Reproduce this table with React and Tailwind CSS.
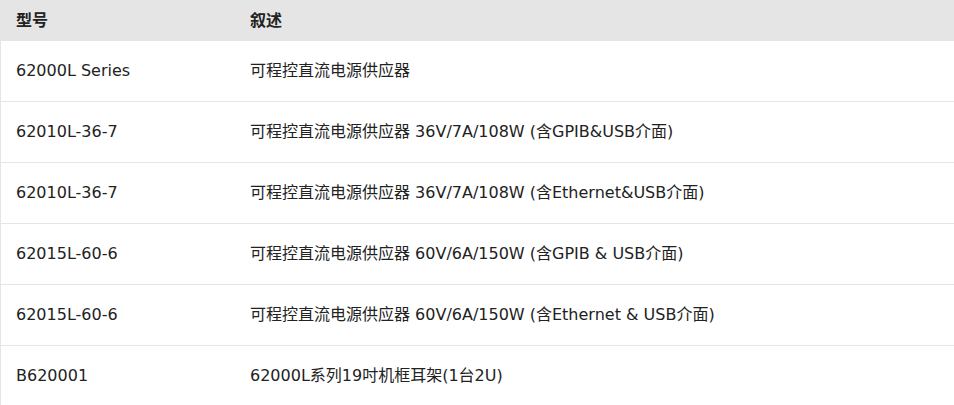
const rows = [
  ['62000L Series', '可程控直流电源供应器'],
  ['62010L-36-7', '可程控直流电源供应器 36V/7A/108W (含GPIB&USB介面)'],
  ['62010L-36-7', '可程控直流电源供应器 36V/7A/108W (含Ethernet&USB介面)'],
  ['62015L-60-6', '可程控直流电源供应器 60V/6A/150W (含GPIB & USB介面)'],
  ['62015L-60-6', '可程控直流电源供应器 60V/6A/150W (含Ethernet & USB介面)'],
  ['B620001', '62000L系列19吋机框耳架(1台2U)'],
];

export default function App() {
  return (
    <div className="w-[954px] h-[405px] overflow-hidden bg-white font-['DejaVu_Sans','Noto_Sans_CJK_SC',sans-serif] text-[16px] text-[#222]">
      <div className="flex h-[41px] items-center bg-[#e5e5e5] font-bold">
        <div className="w-[234px] pl-4">型号</div>
        <div className="flex-1 pl-4">叙述</div>
      </div>
      {rows.map(([model, desc], i) => (
        <div key={i} className="flex h-[61px] items-center border-b border-l border-[#e5e5e5]">
          <div className="w-[233px] pl-[15px]">{model}</div>
          <div className="flex-1 pl-4">{desc}</div>
        </div>
      ))}
    </div>
  );
}
